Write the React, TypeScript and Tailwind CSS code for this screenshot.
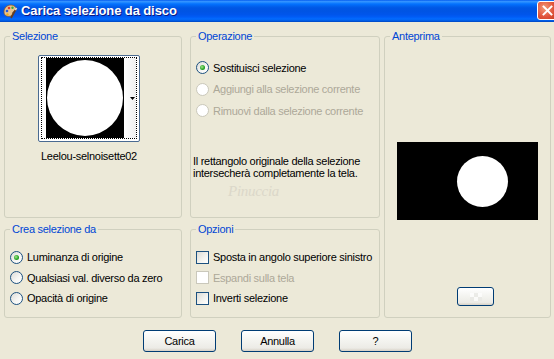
import React from "react";

const F = "font-['Liberation_Sans',Arial,sans-serif]";

function Radio({ checked = false, disabled = false }: { checked?: boolean; disabled?: boolean }) {
  return (
    <span
      className={
        "relative flex h-[13px] w-[13px] shrink-0 items-center justify-center rounded-full border " +
        (disabled
          ? "border-[#CAC8BB] bg-white"
          : "border-[#1C5180] bg-[linear-gradient(135deg,#DCDCD7,#F7F7F5_60%,#FFFFFF)]")
      }
    >
      {checked && (
        <span className="h-[5px] w-[5px] rounded-full bg-[radial-gradient(circle_at_40%_40%,#A5E58A,#21A121_60%,#1A7F1A)]" />
      )}
    </span>
  );
}

function Check({ disabled = false }: { disabled?: boolean }) {
  return (
    <span
      className={
        "h-[13px] w-[13px] shrink-0 border " +
        (disabled
          ? "border-[#CAC8BB] bg-white"
          : "border-[#1C5180] bg-[linear-gradient(135deg,#DCDCD7,#F4F4F0_60%,#FFFFFF)]")
      }
    />
  );
}

function Group({
  label,
  className,
  children,
}: {
  label: string;
  className: string;
  children?: React.ReactNode;
}) {
  return (
    <fieldset className={"rounded-[3px] border border-[#D0D0BF] " + className}>
      <legend className="ml-[5px] px-[2px] leading-[13px] text-[#0046D5]">{label}</legend>
      {children}
    </fieldset>
  );
}

function Btn({ children, className = "" }: { children?: React.ReactNode; className?: string }) {
  return (
    <div
      className={
        "flex items-center justify-center rounded-[3px] border border-[#003C74] bg-[linear-gradient(180deg,#FFFFFF,#F3F3EF_50%,#ECEBE6_85%,#D6D0C5)] text-black " +
        className
      }
    >
      {children}
    </div>
  );
}

function AppIcon() {
  return (
    <svg width="16" height="16" viewBox="0 0 16 16">
      <path d="M2 9c0-4 3-7 7-7 3 0 5 2 5 4 0 2-2 2-3 3s0 3-2 4c-3 1-7 0-7-4z" fill="#E9C38F" stroke="#8A5A2B" strokeWidth="0.8" />
      <circle cx="5" cy="8" r="1.3" fill="#2B5BD7" />
      <circle cx="7" cy="5" r="1.3" fill="#E23B2E" />
      <circle cx="10.5" cy="4.8" r="1.2" fill="#3BAA3B" />
      <circle cx="5.5" cy="11.5" r="1.2" fill="#F2B01E" />
      <path d="M9 15l5-9" stroke="#6B3E1C" strokeWidth="1.6" />
      <path d="M13.3 7.2l1.2-2.4" stroke="#D8D8D8" strokeWidth="1.8" />
    </svg>
  );
}

export default function App() {
  return (
    <div className={"relative h-[359px] w-[554px] overflow-hidden whitespace-nowrap bg-[#ECE9D8] text-[11px] tracking-[-0.28px] text-black " + F}>
      {/* title bar */}
      <div className="flex h-[22px] items-center bg-[linear-gradient(180deg,#0058EE_0%,#3593FF_6%,#288EFF_10%,#127DFF_14%,#036FFC_20%,#0262EE_28%,#0057E5_36%,#0054E3_50%,#0055EB_66%,#005BF5_76%,#026AFE_86%,#0062EF_92%,#0052D6_96%,#0046C0_100%)]">
        <div className="ml-[2px] flex h-[16px] w-[16px] items-center justify-center">
          <AppIcon />
        </div>
        <span className="ml-[3px] text-[13px] font-bold tracking-[-0.1px] text-white [text-shadow:1px_1px_0_#0A1883]">
          Carica selezione da disco
        </span>
        <div className="ml-auto mr-[-4px] mt-[1px] flex h-[19px] w-[21px] items-center justify-center self-start rounded-[3px] border border-white bg-[radial-gradient(circle_at_35%_35%,#F29A78,#E0533A_55%,#C43A1E)]">
          <svg width="11" height="11" viewBox="0 0 11 11">
            <path d="M1.5 1.5l8 8M9.5 1.5l-8 8" stroke="white" strokeWidth="1.9" strokeLinecap="square" />
          </svg>
        </div>
      </div>

      {/* body */}
      <div className="flex pl-[4px] pt-[8px]">
        <div className="grid grid-cols-[178px_190px] grid-rows-[188px_95px] gap-x-[8px] gap-y-[5px]">
          <Group label="Selezione" className="h-[188px]">
            <div className="ml-[33px] mt-[12px] flex w-[102px] flex-col items-center">
              <div className="h-[87px] w-[102px] rounded-[2px] border border-[#4A6A91] bg-white px-[2px] pb-[2px] pt-[1px]">
                <div className="flex h-full border border-dotted border-black">
                  <div className="ml-[4px] flex h-full w-[78px] items-center justify-center bg-black">
                    <div className="h-[76px] w-[76px] rounded-full bg-white" />
                  </div>
                  <div className="flex flex-1 items-center justify-end bg-[linear-gradient(90deg,#FFFFFF,#EFEFEF)] pr-[1px]">
                    <svg width="5" height="3" viewBox="0 0 5 3">
                      <path d="M0 0h5L2.5 3z" fill="black" />
                    </svg>
                  </div>
                </div>
              </div>
              <div className="mt-[8px] leading-[13px]">Leelou-selnoisette02</div>
            </div>
          </Group>

          <Group label="Operazione" className="relative h-[188px]">
            <div className="ml-[5px] mt-[14px] flex flex-col">
              <div className="flex h-[21.5px] items-center gap-[4px]">
                <Radio checked />
                <span>Sostituisci selezione</span>
              </div>
              <div className="flex h-[21.5px] items-center gap-[4px] text-[#ACA899]">
                <Radio disabled />
                <span>Aggiungi alla selezione corrente</span>
              </div>
              <div className="flex h-[21.5px] items-center gap-[4px] text-[#ACA899]">
                <Radio disabled />
                <span>Rimuovi dalla selezione corrente</span>
              </div>
            </div>
            <p className="ml-[2px] mt-[33px] leading-[12.5px]">
              Il rettangolo originale della selezione
              <br />
              intersecherà completamente la tela.
            </p>
          </Group>

          <Group label="Crea selezione da" className="h-[95px]">
            <div className="ml-[5px] mt-[11px] flex flex-col">
              <div className="flex h-[20.5px] items-center gap-[4px]">
                <Radio checked />
                <span>Luminanza di origine</span>
              </div>
              <div className="flex h-[20.5px] items-center gap-[4px]">
                <Radio />
                <span>Qualsiasi val. diverso da zero</span>
              </div>
              <div className="flex h-[20.5px] items-center gap-[4px]">
                <Radio />
                <span>Opacità di origine</span>
              </div>
            </div>
          </Group>

          <Group label="Opzioni" className="h-[95px]">
            <div className="ml-[5px] mt-[11px] flex flex-col">
              <div className="flex h-[20.5px] items-center gap-[4px]">
                <Check />
                <span>Sposta in angolo superiore sinistro</span>
              </div>
              <div className="flex h-[20.5px] items-center gap-[4px] text-[#ACA899]">
                <Check disabled />
                <span>Espandi sulla tela</span>
              </div>
              <div className="flex h-[20.5px] items-center gap-[4px]">
                <Check />
                <span>Inverti selezione</span>
              </div>
            </div>
          </Group>
        </div>

        <Group label="Anteprima" className="ml-[4px] h-[288px] w-[167px]">
          <div className="ml-[12px] mt-[99px] flex h-[78px] w-[141px] items-center bg-black">
            <div className="ml-[60px] h-[51px] w-[51px] rounded-full bg-white" />
          </div>
          <Btn className="ml-[72px] mt-[67px] h-[19px] w-[37px]">
            <div className="grid grid-cols-3 opacity-70">
              <span className="h-[4px] w-[4px] bg-white" />
              <span className="h-[4px] w-[4px] bg-[#E8E8E4]" />
              <span className="h-[4px] w-[4px] bg-white" />
              <span className="h-[4px] w-[4px] bg-[#E8E8E4]" />
              <span className="h-[4px] w-[4px] bg-white" />
              <span className="h-[4px] w-[4px] bg-[#E8E8E4]" />
            </div>
          </Btn>
        </Group>
      </div>

      {/* buttons */}
      <div className="mt-[12px] flex gap-[25px] pl-[143px]">
        <Btn className="h-[22px] w-[73px]">Carica</Btn>
        <Btn className="h-[22px] w-[73px]">Annulla</Btn>
        <Btn className="h-[22px] w-[73px]">?</Btn>
      </div>

      {/* watermark */}
      <div className="pointer-events-none absolute left-[228px] top-[180px] font-['Liberation_Serif',serif] text-[15px] italic text-[#D8D4C6] opacity-80">
        Pinuccia
      </div>
    </div>
  );
}
